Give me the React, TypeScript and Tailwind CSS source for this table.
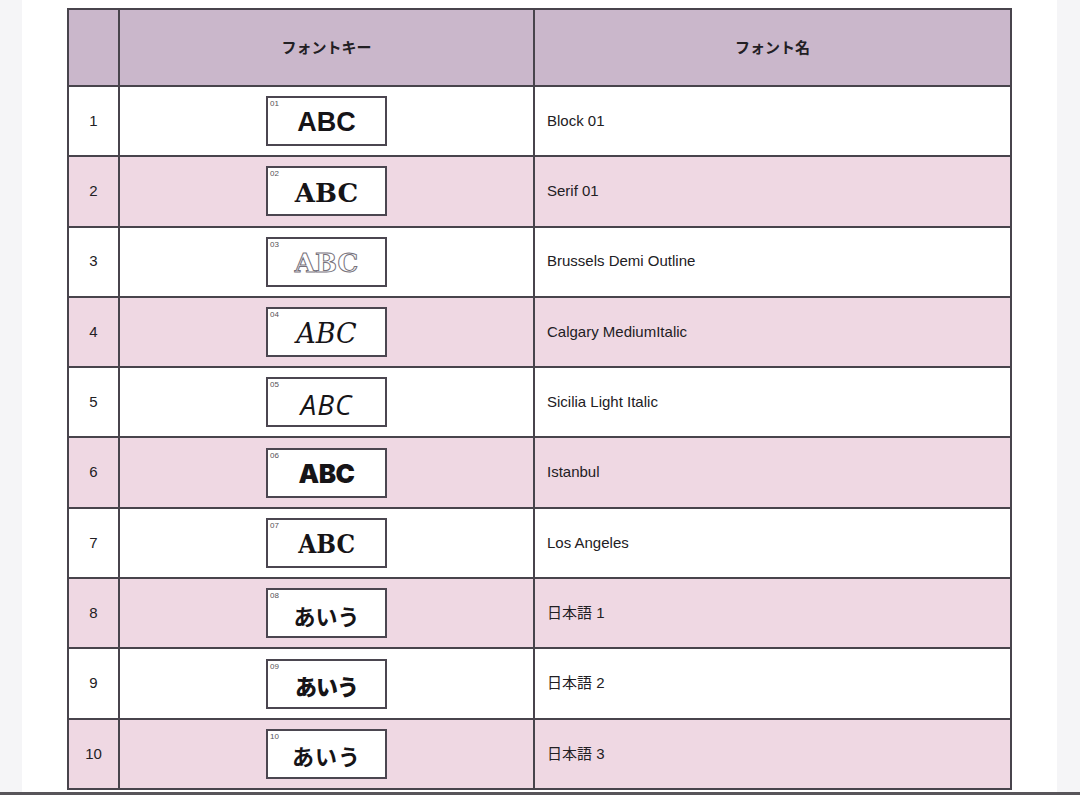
import React from "react";

type Row = {
  no: number;
  name: string;
  sample: string;
  cls: string;
};

const rows: Row[] = [
  { no: 1, name: "Block 01", sample: "ABC", cls: "font-['Liberation_Sans',Arial,sans-serif] font-bold text-[27px]" },
  { no: 2, name: "Serif 01", sample: "ABC", cls: "font-['DejaVu_Serif',serif] font-bold text-[26px]" },
  {
    no: 3,
    name: "Brussels Demi Outline",
    sample: "ABC",
    cls: "font-['DejaVu_Serif',serif] font-bold text-[26px] text-white [-webkit-text-stroke:1px_#77727c]",
  },
  { no: 4, name: "Calgary MediumItalic", sample: "ABC", cls: "font-['DejaVu_Serif',serif] italic text-[27px]" },
  { no: 5, name: "Sicilia Light Italic", sample: "ABC", cls: "font-['Open_Sans',sans-serif] italic text-[28px] tracking-[1px]" },
  { no: 6, name: "Istanbul", sample: "ABC", cls: "font-['Inter',sans-serif] font-black text-[26px] tracking-[-0.5px]" },
  {
    no: 7,
    name: "Los Angeles",
    sample: "ABC",
    cls: "font-['DejaVu_Serif',serif] font-bold text-[26px] scale-x-90",
  },
  { no: 8, name: "日本語 1", sample: "あいう", cls: "font-['Noto_Sans_CJK_JP',sans-serif] font-bold text-[22px]" },
  { no: 9, name: "日本語 2", sample: "あいう", cls: "font-['Noto_Sans_CJK_JP',sans-serif] font-black text-[22px] tracking-[-1px]" },
  { no: 10, name: "日本語 3", sample: "あいう", cls: "font-['Noto_Sans_CJK_JP',sans-serif] font-bold text-[22px] tracking-[1px]" },
];

function FontKey({ no, sample, cls }: { no: number; sample: string; cls: string }) {
  return (
    <div className="relative mx-auto w-[121px] h-[50px] bg-white border-2 border-[#4b4650] flex items-center justify-center">
      <span className="absolute left-[2px] top-[2px] text-[8px] leading-none text-[#555257] font-['Liberation_Sans',Arial,sans-serif]">
        {String(no).padStart(2, "0")}
      </span>
      <span className={`leading-none text-[#161417] pt-[3px] ${cls}`}>{sample}</span>
    </div>
  );
}

export default function App() {
  return (
    <div className="w-[1080px] h-[795px] bg-[#f5f5f7] flex flex-col overflow-hidden">
      <div className="flex-1 mx-[22px] w-[1035px] bg-white pt-[8px] px-[45px]">
        <table className="w-[945px] border-collapse font-['Liberation_Sans',Arial,'Noto_Sans_CJK_JP',sans-serif] text-[#222024] text-[15px]">
          <thead>
            <tr className="h-[77px] bg-[#cab7cb]">
              <th className="w-[51px] border-2 border-[#48444c]"></th>
              <th className="w-[415px] border-2 border-[#48444c] font-['Noto_Sans_CJK_JP',sans-serif] font-bold text-[15px]">
                フォントキー
              </th>
              <th className="border-2 border-[#48444c] font-['Noto_Sans_CJK_JP',sans-serif] font-bold text-[15px]">
                フォント名
              </th>
            </tr>
          </thead>
          <tbody>
            {rows.map((r) => (
              <tr key={r.no} className={`h-[70.3px] ${r.no % 2 === 0 ? "bg-[#efd8e3]" : "bg-white"}`}>
                <td className="border-2 border-[#48444c] text-center">{r.no}</td>
                <td className="border-2 border-[#48444c]">
                  <FontKey no={r.no} sample={r.sample} cls={r.cls} />
                </td>
                <td className="border-2 border-[#48444c] pl-[12px]">{r.name}</td>
              </tr>
            ))}
          </tbody>
        </table>
      </div>
      <div className="h-[3px] bg-[#58555a]"></div>
    </div>
  );
}
